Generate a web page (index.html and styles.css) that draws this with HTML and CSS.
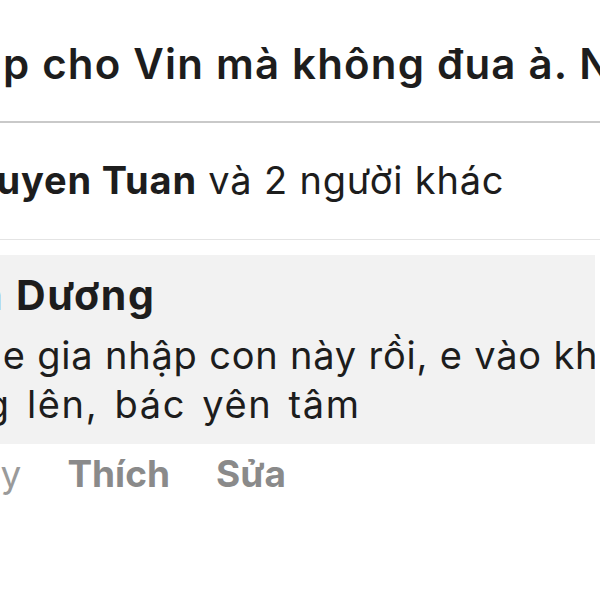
FILE: index.html
```html
<!DOCTYPE html>
<html lang="vi">
<head>
    <meta charset="UTF-8">
    <meta name="viewport" content="width=device-width, initial-scale=1.0">
    <title>Bình luận</title>
    <link rel="stylesheet" href="styles.css">
</head>
<body>
    <div class="post-text">
        <div class="clip">p cho Vin mà không đua à. Nếu</div>
    </div>

    <div class="reactions">
        <div class="clip shift-reactions"><b>Nguyen Tuan</b> và 2 người khác</div>
    </div>

    <div class="comment">
        <div class="bubble">
            <div class="author clip shift-author">Tuấn Dương</div>
            <div class="body">
                <div class="clip shift-line1">Bác ơi e gia nhập con này rồi, e vào khá lâu rồi</div>
                <div class="clip shift-line2">đang lên, bác yên tâm</div>
            </div>
        </div>
        <div class="actions">
            <span class="time">Hôm nay</span>
            <span class="action">Thích</span>
            <span class="action">Sửa</span>
        </div>
    </div>
</body>
</html>
```

FILE: styles.css
```css
html, body {
    margin: 0;
    padding: 0;
    background: #ffffff;
}
body {
    width: 600px;
    height: 600px;
    overflow: hidden;
    font-family: Inter, Roboto, "Liberation Sans", sans-serif;
    color: #1d1d1d;
}
.clip {
    white-space: nowrap;
}
.post-text {
    font-size: 42px;
    font-weight: 600;
    letter-spacing: 1.2px;
    line-height: 48px;
    padding: 40px 0 33px 3px;
    border-bottom: 2px solid #c9c9c9;
    overflow: hidden;
}
.reactions {
    font-size: 38px;
    letter-spacing: 0.8px;
    line-height: 46px;
    padding: 34px 0 36px 0;
    border-bottom: 1px solid #e4e4e4;
    overflow: hidden;
}
.reactions b {
    font-weight: 700;
}
.shift-reactions {
    margin-left: -58px;
}
.comment {
    padding-top: 15px;
}
.bubble {
    background: #f2f2f2;
    margin-right: 5px;
    padding: 20px 0 15px 0;
    overflow: hidden;
}
.author {
    font-size: 41px;
    font-weight: 700;
    letter-spacing: 1.8px;
    line-height: 40px;
}
.shift-author {
    margin-left: -102px;
}
.body {
    font-size: 38px;
    letter-spacing: 0.8px;
    line-height: 49px;
    margin-top: 16px;
}
.shift-line1 {
    margin-left: -124px;
}
.shift-line2 {
    margin-left: -86px;
    letter-spacing: 1.6px;
    word-spacing: 4px;
}
.actions {
    display: flex;
    gap: 46px;
    font-size: 37px;
    line-height: 40px;
    margin-top: 10px;
    color: #8a8a8a;
}
.time {
    margin-left: -134px;
    color: #9a9a9a;
}
.action {
    font-weight: 700;
}
```
